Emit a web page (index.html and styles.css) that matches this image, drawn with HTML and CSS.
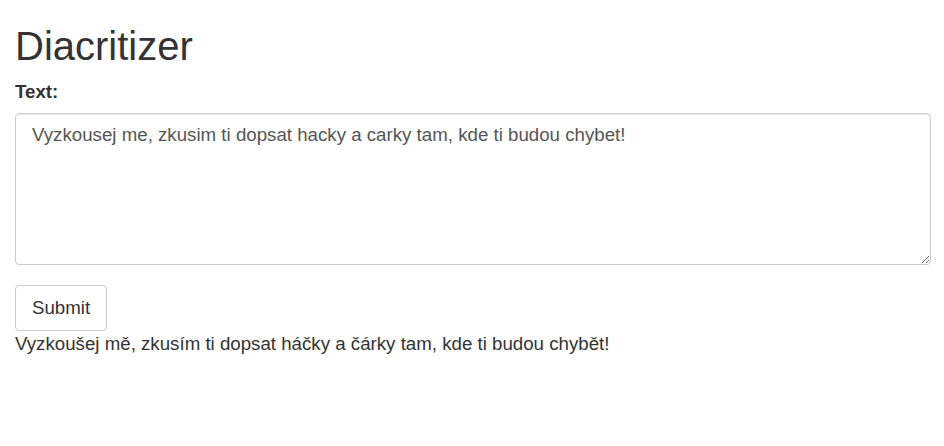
FILE: index.html
```html
<!DOCTYPE html>
<html>
<head>
<meta charset="utf-8">
<link rel="stylesheet" href="styles.css">
</head>
<body>
<div class="container">
  <h1 class="title">Diacritizer</h1>
  <form class="form">
    <div class="group">
      <label class="label" for="text">Text:</label>
      <textarea id="text" class="control">Vyzkousej me, zkusim ti dopsat hacky a carky tam, kde ti budou chybet!</textarea>
    </div>
    <button type="button" class="btn">Submit</button>
  </form>
  <div class="result">Vyzkoušej mě, zkusím ti dopsat háčky a čárky tam, kde ti budou chybět!</div>
</div>
</body>
</html>
```

FILE: styles.css
```css
* { box-sizing: border-box; }
html, body { margin: 0; padding: 0; background: #fff; }
body {
  font-family: "Liberation Sans", Arial, Helvetica, sans-serif;
  font-size: 18.7px;
  line-height: 1.42857;
  color: #333;
}
.container { padding: 0 13px 0 15px; }
.title {
  font-size: 40px;
  font-weight: 500;
  line-height: 1.1;
  margin: 24px 0 11px;
}
.group { margin-bottom: 20px; }
.label {
  display: block;
  font-weight: 700;
  margin-bottom: 7px;
}
.control {
  display: block;
  width: 100%;
  height: 152px;
  padding: 8px 16px;
  font-family: inherit;
  font-size: 18.7px;
  line-height: 1.42857;
  color: #555;
  background: #fff;
  border: 1px solid #ccc;
  border-radius: 4px;
  box-shadow: inset 0 1px 1px rgba(0,0,0,.075);
  margin: 0;
}
.btn {
  display: inline-block;
  font-family: inherit;
  font-size: 18.7px;
  line-height: 26px;
  color: #333;
  background: #fff;
  border: 1px solid #ccc;
  border-radius: 4px;
  padding: 9px 16px;
  margin: 0;
  vertical-align: top;
  cursor: pointer;
}
.result { margin-top: 0; }
```
